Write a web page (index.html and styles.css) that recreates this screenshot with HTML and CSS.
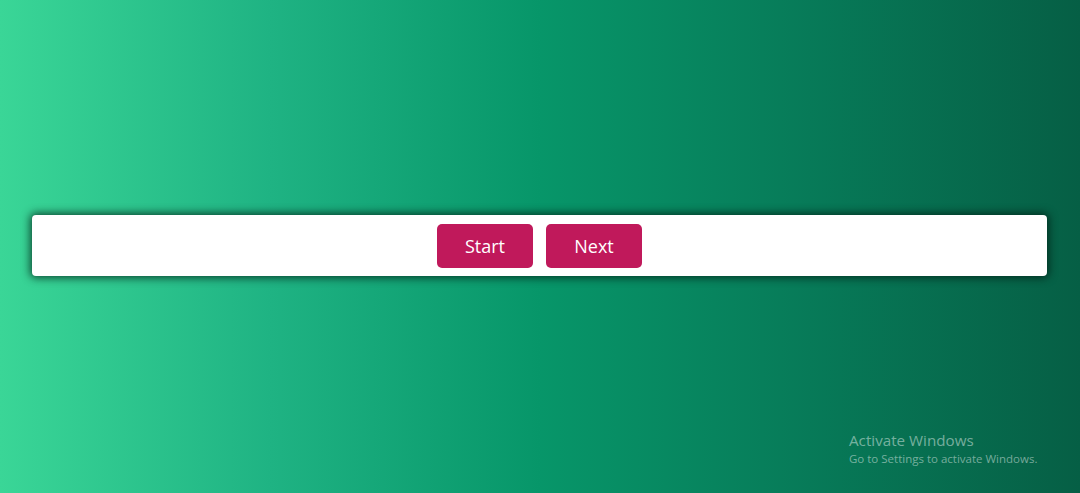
FILE: index.html
```html
<!DOCTYPE html>
<html lang="en">
<head>
<meta charset="utf-8">
<title>Buttons</title>
<link rel="stylesheet" href="styles.css">
</head>
<body>
<main class="page">
  <div class="bar">
    <button class="btn">Start</button>
    <button class="btn">Next</button>
  </div>
</main>
<div class="watermark">
  <div class="wm-title">Activate Windows</div>
  <div class="wm-sub">Go to Settings to activate Windows.</div>
</div>
</body>
</html>
```
FILE: styles.css
```css
html, body {
  margin: 0;
  height: 100%;
}
body {
  background: linear-gradient(to right, #3ad697 0%, #1fb383 25%, #079669 50%, #077a58 75%, #065f45 100%);
  font-family: "Open Sans", "Noto Sans", sans-serif;
  overflow: hidden;
}
.page {
  height: 100%;
  display: flex;
  align-items: center;
  padding: 0 33px 0 32px;
  box-sizing: border-box;
}
.bar {
  flex: 1;
  background: #fff;
  border-radius: 4px;
  box-shadow: 0 0 8px 2px rgba(0, 30, 20, 0.75);
  display: flex;
  justify-content: center;
  gap: 13px;
  padding: 9px 0 8px;
  margin-top: -2px;
}
.btn {
  width: 96px;
  height: 44px;
  border: none;
  border-radius: 5px;
  background: #c0195b;
  color: #fff;
  font-family: "Open Sans", "Noto Sans", sans-serif;
  font-size: 18px;
  padding: 0;
  cursor: pointer;
}
.watermark {
  position: absolute;
  left: 849px;
  top: 430px;
  color: rgba(255, 255, 255, 0.45);
  font-family: "Open Sans", "Noto Sans", sans-serif;
}
.wm-title {
  font-size: 15.2px;
  line-height: 20px;
}
.wm-sub {
  font-size: 11.5px;
  line-height: 18px;
}
```
